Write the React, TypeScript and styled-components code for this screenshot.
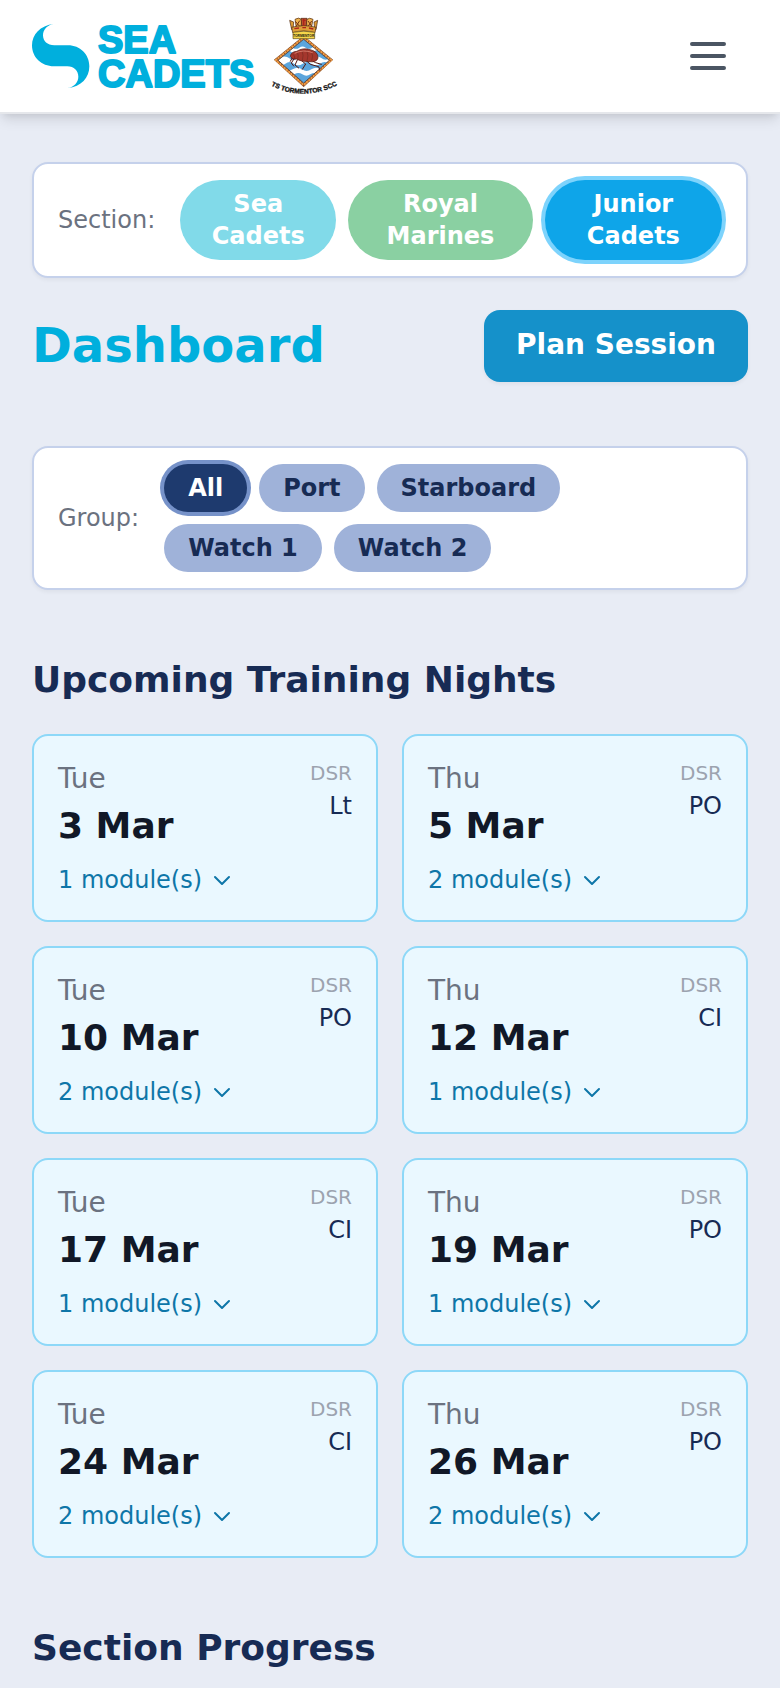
import React from 'react';
import styled, { createGlobalStyle, css } from 'styled-components';

const GlobalStyle = createGlobalStyle`
  *, *::before, *::after { box-sizing: border-box; }
  body {
    margin: 0;
    background: #e8ecf5;
    color: #172b54;
    font-family: "DejaVu Sans", sans-serif;
  }
  h1, h2, p { margin: 0; }
  button { font-family: inherit; cursor: pointer; }
`;

const Header = styled.header`
  display: flex;
  align-items: center;
  justify-content: space-between;
  padding: 16px 32px;
  background: #fff;
  border-bottom: 2px solid #e5e7eb;
  box-shadow: 0 8px 12px -2px rgba(0, 0, 0, 0.1), 0 4px 8px -4px rgba(0, 0, 0, 0.1);
`;

const Brand = styled.a`
  display: flex;
  align-items: center;
  gap: 12px;
  text-decoration: none;
`;

const Emblem = styled.svg`
  display: block;
  overflow: visible;
`;

const MenuButton = styled.button`
  display: flex;
  padding: 16px;
  border: 0;
  background: none;
  color: #4b5563;
`;

const Main = styled.main`
  display: flex;
  flex-direction: column;
  padding: 48px 32px 0;
`;

const FilterBar = styled.div`
  display: flex;
  align-items: center;
  gap: 25px;
  padding: 16px 24px;
  background: #fff;
  border: 2px solid #c5d1eb;
  border-radius: 16px;
  box-shadow: 0 2px 4px rgba(0, 0, 0, 0.05);
`;

const FilterLabel = styled.span`
  font-size: 24px;
  line-height: 32px;
  color: #6b7280;
`;

const PillGroup = styled.div<{ $wrap?: boolean }>`
  display: flex;
  flex: 1;
  flex-wrap: ${({ $wrap }) => ($wrap ? 'wrap' : 'nowrap')};
  gap: 12px;
`;

const Pill = styled.button`
  padding: 8px 24px;
  border: 0;
  border-radius: 40px;
  font-size: 24px;
  line-height: 32px;
  font-weight: 700;
`;

const SectionPill = styled(Pill)<{ $color: string; $active?: boolean }>`
  background: ${({ $color }) => $color};
  color: #fff;
  ${({ $active }) => $active && css`box-shadow: 0 0 0 4px #7dd3fc;`}
`;

const GroupPill = styled(Pill)<{ $active?: boolean }>`
  background: ${({ $active }) => ($active ? '#1e3a6e' : '#9fb2d9')};
  color: ${({ $active }) => ($active ? '#fff' : '#172b54')};
  ${({ $active }) => $active && css`box-shadow: 0 0 0 4px #7692c9;`}
`;

const TitleRow = styled.div`
  display: flex;
  align-items: flex-start;
  justify-content: space-between;
  margin: 32px 0 64px;
`;

const Title = styled.h1`
  font-size: 48px;
  line-height: 70px;
  color: #00afdd;
`;

const PlanButton = styled.button`
  padding: 16px 32px 18px;
  border: 0;
  border-radius: 16px;
  background: #1591ca;
  color: #fff;
  font-size: 28px;
  line-height: 38px;
  font-weight: 700;
  box-shadow: 0 2px 4px rgba(0, 0, 0, 0.05);
`;

const SectionTitle = styled.h2`
  margin-top: 64px;
  font-size: 36px;
  line-height: 52px;
`;

const NightGrid = styled.div`
  display: grid;
  grid-template-columns: repeat(2, 1fr);
  gap: 24px;
  margin-top: 28px;
`;

const NightCard = styled.article`
  display: flex;
  justify-content: space-between;
  padding: 24px;
  background: #eaf8ff;
  border: 2px solid #8dd8f8;
  border-radius: 16px;
`;

const Day = styled.p`
  font-size: 28px;
  line-height: 38px;
  color: #6b7280;
`;

const NightDate = styled.p`
  font-size: 36px;
  line-height: 56px;
  font-weight: 700;
  color: #111827;
`;

const ModulesButton = styled.button`
  display: flex;
  align-items: center;
  gap: 8px;
  margin-top: 10px;
  padding: 0;
  border: 0;
  background: none;
  font-size: 24px;
  line-height: 32px;
  color: #0e76a8;
`;

const Duty = styled.div`
  text-align: right;
`;

const DutyLabel = styled.p`
  font-size: 20px;
  line-height: 26px;
  color: #9ca3af;
`;

const DutyName = styled.p`
  && { margin-top: 4px; }
  font-size: 24px;
  line-height: 32px;
`;

const SeaCadetsLogo = () => (
  <Emblem width="224" height="64" viewBox="36 42 672 192" role="img" aria-label="Sea Cadets">
    <path
      fill="#00afdd"
      d="M102 42C60 46 36 74 36 106C36 142 64 169 102 169H142C162 169 175 182 175 200C175 217 162 231 143 234C184 231 208 203 208 169C208 133 180 106 144 106H103C82 106 69 93 69 76C69 59 82 44 102 42Z"
    />
    <g
      fill="#00afdd"
      stroke="#00afdd"
      strokeWidth="6"
      strokeLinejoin="round"
      fontFamily='"Liberation Sans", Arial, sans-serif'
      fontWeight="700"
      fontSize="114"
    >
      <text x="234" y="128">SEA</text>
      <text x="234" y="230">CADETS</text>
    </g>
  </Emblem>
);

const Crest = () => (
  <Emblem width="72" height="80" viewBox="24 24 216 240" role="img" aria-label="TS Tormentor SCC">
    <defs>
      <clipPath id="sea"><path d="M131 94L208 157L131 225L54 157Z" /></clipPath>
      <path id="motto" d="M31 231Q78 257 131 257Q184 257 238 228" />
    </defs>
    <path d="M131 83L219 155L131 237L42 155Z" fill="#5c2b14" />
    <path d="M131 89L213 156L131 231L48 156Z" fill="none" stroke="#ee9d45" strokeWidth="7" />
    <path d="M131 89L213 156L131 231L48 156Z" fill="none" stroke="#8a3c1b" strokeWidth="5" strokeDasharray="2 7" />
    <g clipPath="url(#sea)">
      <path d="M40 90H220V230H40Z" fill="#fff" />
      <g fill="#5ba5dc">
        <path d="M90 92H175V119Q165 112 156 119T137 119T118 119T98 119Z" />
        <path d="M50 132Q61 142 72 132T94 132T116 132T138 132T160 132T182 132T210 132V150Q196 160 184 150T160 151T136 151T112 151T88 151T50 151Z" />
        <path d="M50 165Q63 177 76 167T102 167T128 167T154 167T180 167T210 167V183Q196 194 182 184T154 184T126 184T98 184T50 184Z" />
        <path d="M80 198Q91 207 103 199T127 199T151 199T182 199V225H80Z" />
      </g>
    </g>
    <path d="M131 94L208 157L131 225L54 157Z" fill="none" stroke="#3b2117" strokeWidth="2" />
    <g fill="none" stroke="#54160f" strokeWidth="3" strokeLinecap="round" strokeLinejoin="round">
      <path d="M103 151L94 165L101 174M112 156L105 171L116 180M125 158L137 168L127 184M139 158L151 169L176 176L180 187M151 156L167 164L184 169" />
      <path d="M97 149L91 160" />
    </g>
    <path d="M91 145Q93 131 110 130Q128 118 151 125Q175 131 174 150Q170 164 147 161Q122 161 109 153Q97 157 91 145Z" fill="#a5372d" stroke="#4c160f" strokeWidth="2" />
    <path d="M99 139Q105 143 104 153M112 132Q117 143 113 155M126 127Q132 143 127 157M140 126Q147 144 141 159M154 129Q161 145 155 159" fill="none" stroke="#762a21" strokeWidth="2" />
    <path d="M104 136Q130 123 158 134" fill="none" stroke="#d37868" strokeWidth="3" />
    <g stroke="#4a2410" strokeWidth="2" strokeLinejoin="round">
      <path d="M89 37L101 42L99 65H95Z" fill="#dc9c36" />
      <path d="M173 37L162 42L164 65H168Z" fill="#dc9c36" />
      <path d="M105 34Q117 26 125 35L123 61H109Z" fill="#efb34d" />
      <path d="M139 35Q149 27 159 34L154 61H141Z" fill="#efb34d" />
      <path d="M123 31H141L138 60H126Z" fill="#bc502b" />
      <path d="M95 58Q131 48 168 58L165 74Q131 64 98 74Z" fill="#df9f39" />
    </g>
    <path d="M106 40L119 55M119 38L109 54M144 39L155 54M155 39L145 54" stroke="#733115" strokeWidth="3" />
    <path d="M128 37H137M131 32V53M103 62L117 60M127 59H138M147 60L160 63" stroke="#ad241b" strokeWidth="4" />
    <path d="M99 73Q131 66 164 73V92H99Z" fill="#f6d64a" stroke="#584719" strokeWidth="2" />
    <text x="131" y="87" textAnchor="middle" fontFamily='"Liberation Sans", Arial, sans-serif' fontWeight="700" fontSize="10" fill="#221c10">TORMENTOR</text>
    <text fontFamily='"Liberation Sans", Arial, sans-serif' fontWeight="700" fontSize="20" fill="#161616" stroke="#161616" strokeWidth="1">
      <textPath href="#motto" startOffset="49%" textAnchor="middle">TS TORMENTOR SCC</textPath>
    </text>
  </Emblem>
);

const MenuIcon = () => (
  <svg width="48" height="48" viewBox="0 0 24 24" fill="none" stroke="currentColor" strokeWidth="2" strokeLinecap="round" aria-hidden="true">
    <path d="M4 6h16M4 12h16M4 18h16" />
  </svg>
);

const ChevronIcon = () => (
  <svg width="24" height="24" viewBox="0 0 24 24" fill="none" stroke="currentColor" strokeWidth="2" strokeLinecap="round" strokeLinejoin="round" aria-hidden="true">
    <path d="M19 9l-7 7-7-7" />
  </svg>
);

const sections = [
  { name: 'Sea Cadets', color: '#81dae9' },
  { name: 'Royal Marines', color: '#8ad0a2' },
  { name: 'Junior Cadets', color: '#0ea5e9', active: true },
];

const groups = ['All', 'Port', 'Starboard', 'Watch 1', 'Watch 2'];

const nights = [
  { day: 'Tue', date: '3 Mar', duty: 'Lt', modules: 1 },
  { day: 'Thu', date: '5 Mar', duty: 'PO', modules: 2 },
  { day: 'Tue', date: '10 Mar', duty: 'PO', modules: 2 },
  { day: 'Thu', date: '12 Mar', duty: 'CI', modules: 1 },
  { day: 'Tue', date: '17 Mar', duty: 'CI', modules: 1 },
  { day: 'Thu', date: '19 Mar', duty: 'PO', modules: 1 },
  { day: 'Tue', date: '24 Mar', duty: 'CI', modules: 2 },
  { day: 'Thu', date: '26 Mar', duty: 'PO', modules: 2 },
];

export default function App() {
  return (
    <>
      <GlobalStyle />
      <Header>
        <Brand href="#">
          <SeaCadetsLogo />
          <Crest />
        </Brand>
        <MenuButton type="button" aria-label="Open menu">
          <MenuIcon />
        </MenuButton>
      </Header>
      <Main>
        <FilterBar>
          <FilterLabel id="section-label">Section:</FilterLabel>
          <PillGroup role="group" aria-labelledby="section-label">
            {sections.map(({ name, color, active }) => (
              <SectionPill key={name} type="button" $color={color} $active={active} aria-pressed={!!active}>
                {name}
              </SectionPill>
            ))}
          </PillGroup>
        </FilterBar>
        <TitleRow>
          <Title>Dashboard</Title>
          <PlanButton type="button">Plan Session</PlanButton>
        </TitleRow>
        <FilterBar>
          <FilterLabel id="group-label">Group:</FilterLabel>
          <PillGroup $wrap role="group" aria-labelledby="group-label">
            {groups.map((name) => (
              <GroupPill key={name} type="button" $active={name === 'All'} aria-pressed={name === 'All'}>
                {name}
              </GroupPill>
            ))}
          </PillGroup>
        </FilterBar>
        <SectionTitle>Upcoming Training Nights</SectionTitle>
        <NightGrid>
          {nights.map(({ day, date, duty, modules }) => (
            <NightCard key={date}>
              <div>
                <Day>{day}</Day>
                <NightDate>{date}</NightDate>
                <ModulesButton type="button" aria-expanded={false}>
                  {modules} module(s)
                  <ChevronIcon />
                </ModulesButton>
              </div>
              <Duty>
                <DutyLabel>DSR</DutyLabel>
                <DutyName>{duty}</DutyName>
              </Duty>
            </NightCard>
          ))}
        </NightGrid>
        <SectionTitle>Section Progress</SectionTitle>
      </Main>
    </>
  );
}
